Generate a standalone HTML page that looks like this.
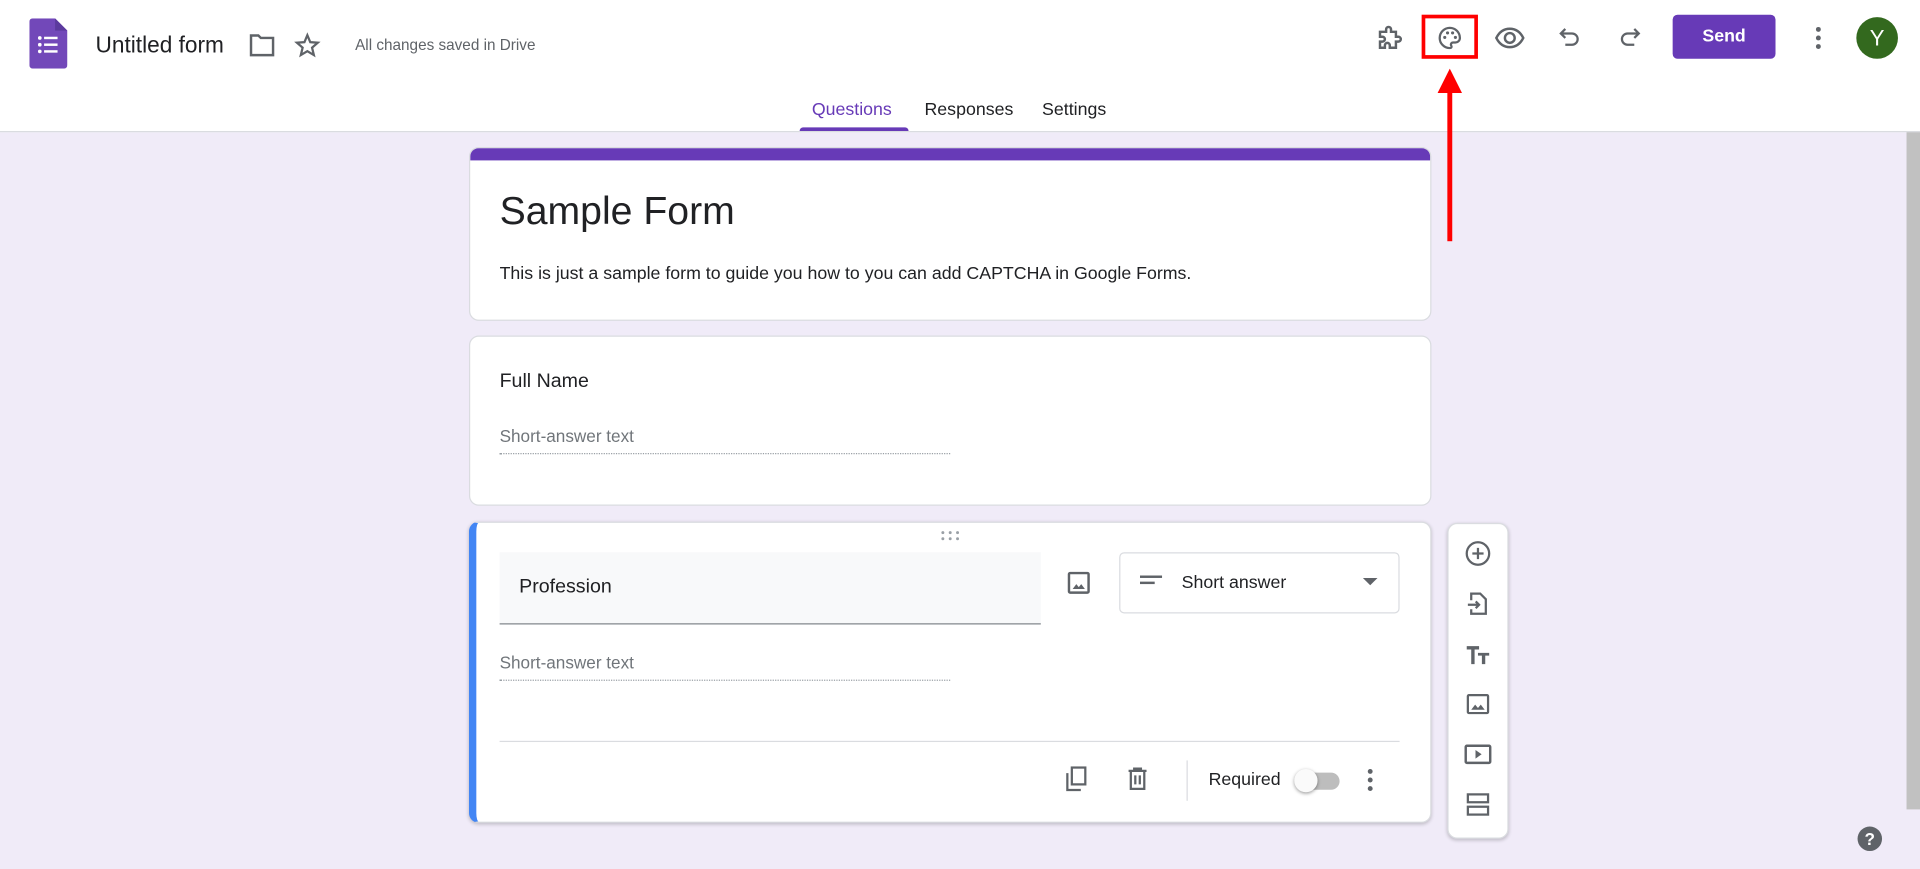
<!DOCTYPE html>
<html><head><meta charset="utf-8"><style>
html,body{margin:0;padding:0;width:1920px;height:869px;overflow:hidden;background:#f0ebf8;font-family:"Liberation Sans",Roboto,sans-serif}
#w{position:absolute;left:0;top:0;width:1568px;height:710px;transform:scale(1.22449);transform-origin:0 0;background:#f0ebf8}
.a{position:absolute}
.hdr{left:0;top:0;width:1568px;height:107px;background:#fff;border-bottom:1px solid #dadce0}
.card{background:#fff;border:1px solid #dadce0;border-radius:8px;box-sizing:border-box}
svg{position:absolute}
.ic{fill:none;stroke:#5f6368;stroke-width:2}
.t{color:#202124;white-space:nowrap}
</style></head><body><div id="w">
<div class="a hdr"></div>
<svg style="left:24px;top:15px" width="31" height="41" viewBox="0 0 31 41"><path d="M3 0H21L31 10V38Q31 41 28 41H3Q0 41 0 38V3Q0 0 3 0Z" fill="#7248b9"/><path d="M21 0V10H31Z" fill="#5c3a9e"/><g fill="#fff"><circle cx="8.5" cy="16" r="1.5"/><circle cx="8.5" cy="21.5" r="1.5"/><circle cx="8.5" cy="27" r="1.5"/><rect x="12" y="15" width="11" height="2"/><rect x="12" y="20.5" width="11" height="2"/><rect x="12" y="26" width="11" height="2"/></g></svg>
<div class="a t" style="left:78px;top:26px;font-size:18.5px">Untitled form</div>
<svg style="left:203px;top:27px" width="22" height="20" viewBox="0 0 22 20"><path d="M2 2H8L10 4H20V18H2Z" class="ic"/></svg>
<svg style="left:240px;top:26px" width="22" height="22" viewBox="0 0 24 24"><path d="M12 3L14.6 9.2 21.3 9.7 16.2 14.1 17.8 20.7 12 17.2 6.2 20.7 7.8 14.1 2.7 9.7 9.4 9.2Z" class="ic" stroke-width="1.8"/></svg>
<div class="a" style="left:290px;top:30px;font-size:12.5px;color:#5f6368">All changes saved in Drive</div>
<svg style="left:1123px;top:19px" width="24" height="24" viewBox="0 0 24 24"><path d="M4 7H9V5A2 2 0 0 1 13 5V7H17V11H19A2 2 0 0 1 19 15H17V20H12V18A2 2 0 0 0 8 18V20H4V15H6A2 2 0 0 0 6 11H4Z" class="ic"/></svg>
<div class="a" style="left:1161px;top:12px;width:46px;height:36px;border:3px solid #f00;box-sizing:border-box"></div>
<svg style="left:1173px;top:20px" width="22" height="22" viewBox="0 0 24 24"><path d="M12 3A9 9 0 0 0 12 21C13.5 21 14 20 13.3 18.9 12.5 17.6 13.4 16 15 16H17A4 4 0 0 0 21 12C21 7 17 3 12 3Z" class="ic"/><g fill="#5f6368"><circle cx="7.5" cy="11.5" r="1.4"/><circle cx="10" cy="7.5" r="1.4"/><circle cx="14.5" cy="7.5" r="1.4"/><circle cx="17" cy="11.5" r="1.4"/></g></svg>
<svg style="left:1220px;top:19px" width="26" height="24" viewBox="0 0 26 24"><path d="M2 12C5 6 9 4.5 13 4.5S21 6 24 12C21 18 17 19.5 13 19.5S5 18 2 12Z" class="ic"/><circle cx="13" cy="12" r="4" class="ic"/></svg>
<svg style="left:1271px;top:20px" width="22" height="22" viewBox="0 0 24 24"><path d="M8 4L4 8 8 12M4 8H14A5 5 0 0 1 14 18H8" class="ic"/></svg>
<svg style="left:1320px;top:20px" width="22" height="22" viewBox="0 0 24 24"><path d="M16 4L20 8 16 12M20 8H10A5 5 0 0 0 10 18H16" class="ic"/></svg>
<div class="a" style="left:1366px;top:12px;width:84px;height:36px;background:#673ab7;border-radius:4px;color:#fff;font-size:14.5px;font-weight:bold;text-align:center;line-height:37px">Send</div>
<svg style="left:1479px;top:20px" width="12" height="22" viewBox="0 0 12 22"><g fill="#5f6368"><circle cx="6" cy="4" r="2"/><circle cx="6" cy="11" r="2"/><circle cx="6" cy="18" r="2"/></g></svg>
<div class="a" style="left:1516px;top:14px;width:34px;height:34px;border-radius:50%;background:#33691e;color:#fff;font-size:18px;text-align:center;line-height:35px">Y</div>
<div class="a" style="left:663px;top:82px;font-size:14.5px;color:#673ab7;font-weight:500">Questions</div>
<div class="a" style="left:653px;top:104px;width:89px;height:3px;background:#673ab7;border-radius:3px 3px 0 0"></div>
<div class="a t" style="left:755px;top:82px;font-size:14.5px">Responses</div>
<div class="a t" style="left:851px;top:82px;font-size:14.5px">Settings</div>
<div class="a" style="left:1182px;top:70px;width:4px;height:127px;background:#f00"></div>
<svg style="left:1174px;top:56px" width="20" height="20" viewBox="0 0 20 20"><path d="M10 0L20 20H0Z" fill="#f00"/></svg>
<div class="a" style="left:1557px;top:108px;width:11px;height:553px;background:#c1c1c1"></div>
<div class="a card" style="left:383px;top:120px;width:786px;height:142px;overflow:hidden"><div style="height:10px;background:#673ab7"></div></div>
<div class="a t" style="left:408px;top:154px;font-size:32px">Sample Form</div>
<div class="a t" style="left:408px;top:216px;font-size:14.5px">This is just a sample form to guide you how to you can add CAPTCHA in Google Forms.</div>
<div class="a card" style="left:383px;top:274px;width:786px;height:139px"></div>
<div class="a t" style="left:408px;top:303px;font-size:16px">Full Name</div>
<div class="a" style="left:408px;top:348px;font-size:14px;color:#70757a">Short-answer text</div>
<div class="a" style="left:408px;top:370px;width:368px;border-top:1px dotted #9aa0a6"></div>
<div class="a card" style="left:383px;top:426px;width:786px;height:246px;border-left:6px solid #4285f4;box-shadow:0 1px 3px rgba(0,0,0,.2)"></div>
<svg style="left:768px;top:433px" width="16" height="9" viewBox="0 0 16 9"><g fill="#9aa0a6"><circle cx="2" cy="2" r="1.2"/><circle cx="8" cy="2" r="1.2"/><circle cx="14" cy="2" r="1.2"/><circle cx="2" cy="7" r="1.2"/><circle cx="8" cy="7" r="1.2"/><circle cx="14" cy="7" r="1.2"/></g></svg>
<div class="a" style="left:408px;top:451px;width:442px;height:58px;background:#f8f9fa;border-bottom:1px solid #80868b"></div>
<div class="a t" style="left:424px;top:471px;font-size:16px">Profession</div>
<svg style="left:871px;top:466px" width="20" height="20" viewBox="0 0 20 20"><rect x="2" y="2" width="16" height="16" rx="1" class="ic"/><path d="M5 15L8 11 10 13.5 12 11 15 15Z" fill="#5f6368"/></svg>
<div class="a" style="left:914px;top:451px;width:229px;height:50px;border:1px solid #dadce0;border-radius:4px;box-sizing:border-box"></div>
<svg style="left:930px;top:469px" width="20" height="10" viewBox="0 0 20 10"><rect x="1" y="1" width="18" height="2" fill="#5f6368"/><rect x="1" y="6" width="12" height="2" fill="#5f6368"/></svg>
<div class="a t" style="left:965px;top:468px;font-size:14.5px">Short answer</div>
<svg style="left:1113px;top:472px" width="12" height="7" viewBox="0 0 12 7"><path d="M0 0H12L6 6Z" fill="#5f6368"/></svg>
<div class="a" style="left:408px;top:533px;font-size:14px;color:#70757a">Short-answer text</div>
<div class="a" style="left:408px;top:555px;width:368px;border-top:1px dotted #9aa0a6"></div>
<div class="a" style="left:408px;top:605px;width:735px;border-top:1px solid #dadce0"></div>
<svg style="left:868px;top:625px" width="22" height="22" viewBox="0 0 24 24"><rect x="8" y="2" width="12" height="15" class="ic"/><path d="M4 7V22H16" class="ic"/></svg>
<svg style="left:918px;top:625px" width="22" height="22" viewBox="0 0 24 24"><path d="M4 5H20M9 5V3H15V5M6 5V21H18V5M10 9V17M14 9V17" class="ic"/></svg>
<div class="a" style="left:969px;top:621px;width:1px;height:33px;background:#dadce0"></div>
<div class="a t" style="left:987px;top:629px;font-size:14.5px">Required</div>
<div class="a" style="left:1062px;top:631px;width:32px;height:14px;border-radius:7px;background:#bdbdbd"></div>
<div class="a" style="left:1057px;top:628px;width:19px;height:19px;border-radius:50%;background:#fafafa;box-shadow:0 1px 3px rgba(0,0,0,.4)"></div>
<svg style="left:1113px;top:626px" width="12" height="22" viewBox="0 0 12 22"><g fill="#5f6368"><circle cx="6" cy="4" r="2"/><circle cx="6" cy="11" r="2"/><circle cx="6" cy="18" r="2"/></g></svg>
<div class="a card" style="left:1182px;top:427px;width:50px;height:258px;box-shadow:0 1px 3px rgba(0,0,0,.2)"></div>
<svg style="left:1196px;top:441px" width="22" height="22" viewBox="0 0 24 24"><circle cx="12" cy="12" r="10" class="ic"/><path d="M12 7V17M7 12H17" class="ic"/></svg>
<svg style="left:1196px;top:482px" width="22" height="22" viewBox="0 0 24 24"><path d="M6 9V3H14L19 8V21H6V17" class="ic"/><path d="M3 13H13M10 10L13 13 10 16" class="ic"/></svg>
<svg style="left:1196px;top:524px" width="22" height="22" viewBox="0 0 24 24"><path d="M2 4H13V7H9V20H6V7H2ZM12 10H22V12.5H18.5V20H15.5V12.5H12Z" fill="#5f6368"/></svg>
<svg style="left:1196px;top:564px" width="22" height="22" viewBox="0 0 24 24"><rect x="3" y="4" width="18" height="16" rx="1" class="ic"/><path d="M6 17L9.5 12.5 12 15.5 14.5 12.5 18 17Z" fill="#5f6368"/></svg>
<svg style="left:1195px;top:605px" width="24" height="22" viewBox="0 0 24 22"><rect x="2" y="4" width="20" height="14" rx="1" class="ic"/><path d="M10 7.5V14.5L15 11Z" fill="#5f6368"/></svg>
<svg style="left:1196px;top:646px" width="22" height="22" viewBox="0 0 24 24"><rect x="3" y="3" width="18" height="7" class="ic"/><rect x="3" y="14" width="18" height="7" class="ic"/></svg>
<div class="a" style="left:1517px;top:675px;width:20px;height:20px;border-radius:50%;background:#5f6368;color:#fff;font-size:14px;font-weight:bold;text-align:center;line-height:20px">?</div>
</div></body></html>
